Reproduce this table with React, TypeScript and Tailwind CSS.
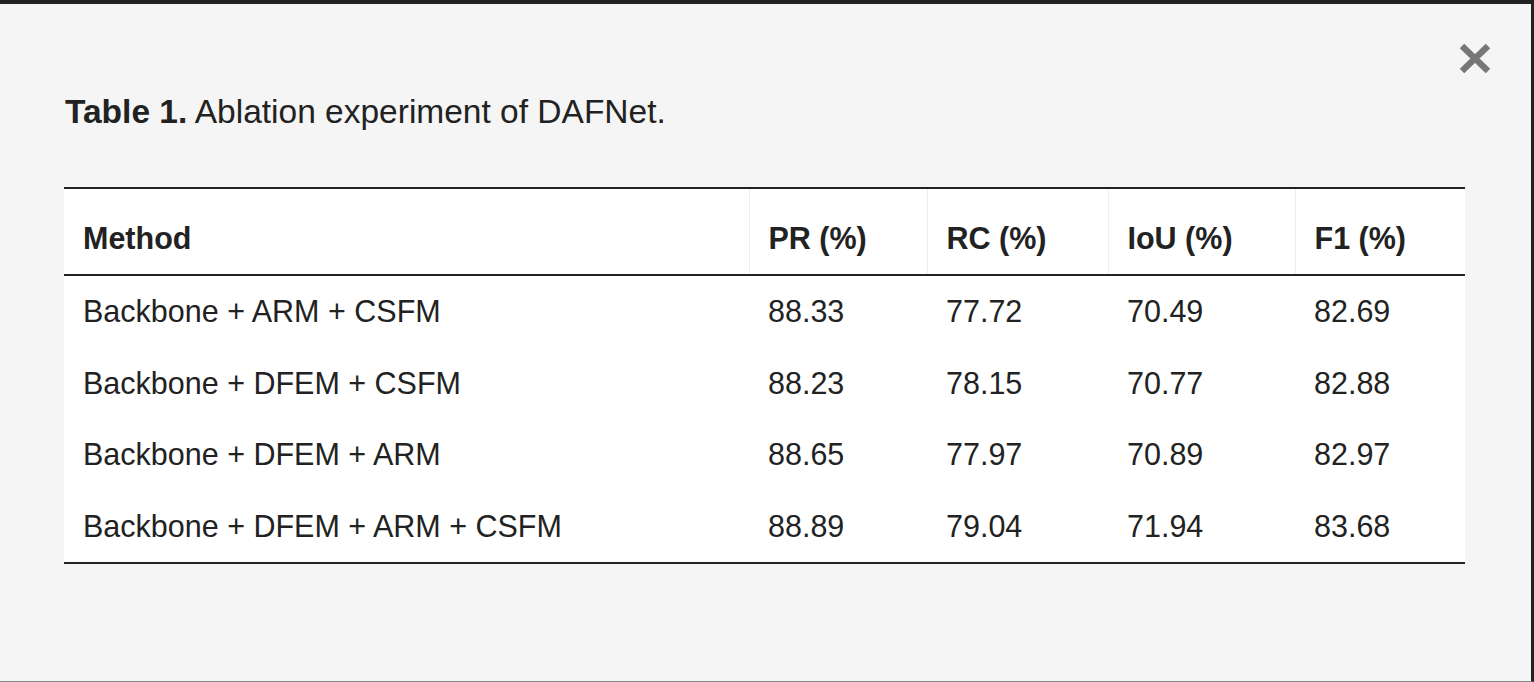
const rows = [
  ["Backbone + ARM + CSFM", "88.33", "77.72", "70.49", "82.69"],
  ["Backbone + DFEM + CSFM", "88.23", "78.15", "70.77", "82.88"],
  ["Backbone + DFEM + ARM", "88.65", "77.97", "70.89", "82.97"],
  ["Backbone + DFEM + ARM + CSFM", "88.89", "79.04", "71.94", "83.68"],
];

const headers = ["Method", "PR (%)", "RC (%)", "IoU (%)", "F1 (%)"];

const CloseIcon = () => (
  <svg width="32" height="31" viewBox="0 0 32 31" fill="none">
    <path d="M3 3L29 28M29 3L3 28" stroke="currentColor" strokeWidth="6.5" />
  </svg>
);

export default function App() {
  return (
    <div className="relative h-[682px] w-full overflow-hidden border-t-4 border-r-[3px] border-b border-t-[#222222] border-r-[#222222] border-b-[#888888] bg-[#f5f5f5] font-['Liberation_Sans',Arial,sans-serif] text-[#222222]">
      <button className="absolute top-[39px] right-[40px] text-[#777777]">
        <CloseIcon />
      </button>

      <div className="pt-[89px] pl-[65px] pr-[66px]">
        <h2 className="text-[33.5px] leading-[38px]">
          <span className="font-bold">Table 1.</span> Ablation experiment of DAFNet.
        </h2>
      </div>

      <div className="mt-[56px] pl-[64px] pr-[66px]">
        <table className="w-full table-fixed border-collapse bg-white text-[30.5px] leading-[34px]">
          <colgroup>
            <col className="w-[685px]" />
            <col className="w-[178px]" />
            <col className="w-[181px]" />
            <col className="w-[187px]" />
            <col />
          </colgroup>
          <thead>
            <tr className="border-t-2 border-b-2 border-[#222222]">
              {headers.map((h, i) => (
                <th
                  key={h}
                  className={
                    i === 0
                      ? "pt-[32px] pb-[19px] pl-[19px] text-left font-bold"
                      : "border-l border-[#eeeeee] pt-[32px] pb-[19px] pl-[19px] text-left font-bold"
                  }
                >
                  {h}
                </th>
              ))}
            </tr>
          </thead>
          <tbody className="border-b-2 border-[#222222]">
            {rows.map((r) => (
              <tr key={r[0]}>
                {r.map((c, i) => (
                  <td key={i} className="pt-[18px] pb-[19.5px] pl-[19px] text-left">
                    {c}
                  </td>
                ))}
              </tr>
            ))}
          </tbody>
        </table>
      </div>
    </div>
  );
}
